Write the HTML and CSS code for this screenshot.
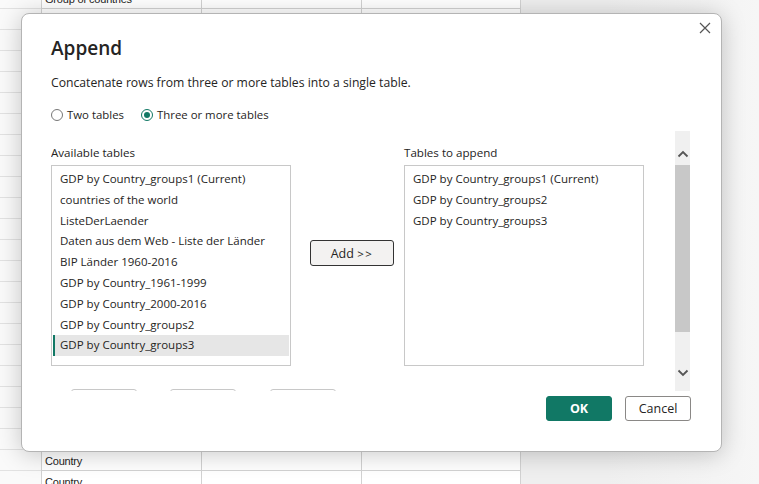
FILE: index.html
```html
<!DOCTYPE html>
<html>
<head>
<meta charset="utf-8">
<link rel="stylesheet" href="styles.css">
</head>
<body>
<div class="app">
  <div class="sheet">
    <div class="row"><div class="hdr"></div><div class="cell">Group of countries</div><div class="cell"></div><div class="cell"></div></div>
    <div class="row"><div class="hdr"></div><div class="cell"></div><div class="cell"></div><div class="cell"></div></div>
    <div class="row"><div class="hdr"></div><div class="cell"></div><div class="cell"></div><div class="cell"></div></div>
    <div class="row"><div class="hdr"></div><div class="cell"></div><div class="cell"></div><div class="cell"></div></div>
    <div class="row"><div class="hdr"></div><div class="cell"></div><div class="cell"></div><div class="cell"></div></div>
    <div class="row"><div class="hdr"></div><div class="cell"></div><div class="cell"></div><div class="cell"></div></div>
    <div class="row"><div class="hdr"></div><div class="cell"></div><div class="cell"></div><div class="cell"></div></div>
    <div class="row"><div class="hdr"></div><div class="cell"></div><div class="cell"></div><div class="cell"></div></div>
    <div class="row"><div class="hdr"></div><div class="cell"></div><div class="cell"></div><div class="cell"></div></div>
    <div class="row"><div class="hdr"></div><div class="cell"></div><div class="cell"></div><div class="cell"></div></div>
    <div class="row"><div class="hdr"></div><div class="cell"></div><div class="cell"></div><div class="cell"></div></div>
    <div class="row"><div class="hdr"></div><div class="cell"></div><div class="cell"></div><div class="cell"></div></div>
    <div class="row"><div class="hdr"></div><div class="cell"></div><div class="cell"></div><div class="cell"></div></div>
    <div class="row"><div class="hdr"></div><div class="cell"></div><div class="cell"></div><div class="cell"></div></div>
    <div class="row"><div class="hdr"></div><div class="cell"></div><div class="cell"></div><div class="cell"></div></div>
    <div class="row"><div class="hdr"></div><div class="cell"></div><div class="cell"></div><div class="cell"></div></div>
    <div class="row"><div class="hdr"></div><div class="cell"></div><div class="cell"></div><div class="cell"></div></div>
    <div class="row"><div class="hdr"></div><div class="cell"></div><div class="cell"></div><div class="cell"></div></div>
    <div class="row"><div class="hdr"></div><div class="cell"></div><div class="cell"></div><div class="cell"></div></div>
    <div class="row"><div class="hdr"></div><div class="cell"></div><div class="cell"></div><div class="cell"></div></div>
    <div class="row"><div class="hdr"></div><div class="cell"></div><div class="cell"></div><div class="cell"></div></div>
    <div class="row"><div class="hdr"></div><div class="cell"></div><div class="cell"></div><div class="cell"></div></div>
    <div class="row"><div class="hdr"></div><div class="cell">Country</div><div class="cell"></div><div class="cell"></div></div>
    <div class="row"><div class="hdr"></div><div class="cell">Country</div><div class="cell"></div><div class="cell"></div></div>
  </div>

  <div class="dialog">
    <button class="close" aria-label="Close">
      <svg width="12" height="12" viewBox="0 0 12 12"><path d="M1 1L11 11M11 1L1 11" stroke="#555" stroke-width="1.2" fill="none"/></svg>
    </button>
    <h1 class="title">Append</h1>
    <p class="desc">Concatenate rows from three or more tables into a single table.</p>
    <div class="radios">
      <label class="radio"><span class="dot"></span>Two tables</label>
      <label class="radio"><span class="dot on"></span>Three or more tables</label>
    </div>
    <div class="body">
      <div class="scroll">
        <div class="cols">
          <div class="col">
            <div class="lbl">Available tables</div>
            <ul class="list">
              <li>GDP by Country_groups1 (Current)</li>
              <li>countries of the world</li>
              <li>ListeDerLaender</li>
              <li>Daten aus dem Web - Liste der Länder</li>
              <li>BIP Länder 1960-2016</li>
              <li>GDP by Country_1961-1999</li>
              <li>GDP by Country_2000-2016</li>
              <li>GDP by Country_groups2</li>
              <li class="sel">GDP by Country_groups3</li>
            </ul>
          </div>
          <div class="mid">
            <button class="add">Add <span class="gt">&gt;&gt;</span></button>
          </div>
          <div class="col">
            <div class="lbl">Tables to append</div>
            <ul class="list">
              <li>GDP by Country_groups1 (Current)</li>
              <li>GDP by Country_groups2</li>
              <li>GDP by Country_groups3</li>
            </ul>
          </div>
        </div>
        <div class="subbtns">
          <span class="sb"></span><span class="sb"></span><span class="sb"></span>
        </div>
      </div>
      <div class="vbar">
        <svg class="arr up" width="12" height="8" viewBox="0 0 12 8"><path d="M1.5 6.5L6 2L10.5 6.5" stroke="#555" stroke-width="1.8" fill="none"/></svg>
        <div class="thumb"></div>
        <div class="track"></div>
        <svg class="arr down" width="12" height="8" viewBox="0 0 12 8"><path d="M1.5 1.5L6 6L10.5 1.5" stroke="#555" stroke-width="1.8" fill="none"/></svg>
      </div>
    </div>
    <div class="footer">
      <button class="btn ok">OK</button>
      <button class="btn cancel">Cancel</button>
    </div>
  </div>
</div>
</body>
</html>
```

FILE: styles.css
```css
* { box-sizing: border-box; }
html, body { margin: 0; padding: 0; }
body {
  width: 759px;
  height: 484px;
  overflow: hidden;
  background: linear-gradient(90deg, #efefef 0%, #efefef 80%, #f6f6f6 100%);
  font-family: "Open Sans", "Noto Sans", sans-serif;
  color: #252423;
}
.app { position: relative; width: 759px; height: 484px; overflow: hidden; }
.sheet {
  margin-top: -12px;
  display: flex;
  flex-direction: column;
  width: 522px;
}
.row {
  display: grid;
  grid-template-columns: 41px 160px 160px 160px;
  height: 21px;
}
.hdr { border-bottom: 1px solid #e2e2e2; background: #fafafa; }
.cell {
  background: #fff;
  border-left: 1px solid #d2d2d2;
  border-bottom: 1px solid #d2d2d2;
  font-family: "Liberation Sans", sans-serif;
  font-size: 11px;
  padding: 5px 0 0 3px;
  color: #252423;
  letter-spacing: -0.2px;
}
.cell:last-child { border-right: 1px solid #d2d2d2; }

.dialog {
  position: absolute;
  left: 21px;
  top: 13px;
  width: 701px;
  height: 439px;
  background: #fff;
  border: 1px solid #b4b4b4;
  border-radius: 8px;
  box-shadow: 0 2px 24px rgba(0,0,0,0.22);
  padding: 0 30px 0 29px;
  display: flex;
  flex-direction: column;
}
.close {
  position: absolute;
  right: 6px;
  top: 4px;
  width: 20px;
  height: 20px;
  padding: 0;
  border: 0;
  background: transparent;
  display: flex;
  align-items: center;
  justify-content: center;
}
.title {
  margin: 21px 0 0 0;
  font-size: 19px;
  font-weight: 600;
  line-height: 26px;
  color: #252423;
}
.desc {
  margin: 13px 0 0 0;
  font-size: 12.2px;
  line-height: 17px;
}
.radios {
  display: flex;
  gap: 17px;
  margin-top: 16px;
  font-size: 11.4px;
  line-height: 16px;
}
.radio { display: flex; align-items: center; gap: 4px; }
.dot {
  width: 12px; height: 12px;
  border: 1px solid #777;
  border-radius: 50%;
  background: #fff;
  position: relative;
}
.dot.on { border-color: #117865; }
.dot.on::after {
  content: "";
  position: absolute;
  left: 2px; top: 2px;
  width: 6px; height: 6px;
  border-radius: 50%;
  background: #117865;
}
.body {
  display: flex;
  margin-top: 8px;
  height: 260px;
}
.scroll {
  width: 624px;
  height: 260px;
  overflow: hidden;
}
.cols {
  display: flex;
  padding-top: 14px;
}
.col { width: 240px; display: flex; flex-direction: column; }
.lbl { font-size: 11.6px; line-height: 16px; height: 20px; }
.list {
  list-style: none;
  margin: 0;
  padding: 3px 1px;
  width: 240px;
  height: 201px;
  border: 1px solid #c8c8c8;
  font-size: 11.5px;
}
.list li {
  height: 20.8px;
  line-height: 20.8px;
  padding-left: 7px;
  white-space: nowrap;
}
.list li.sel {
  background: #e6e6e6;
  border-left: 2px solid #117865;
  padding-left: 5px;
}
.mid {
  width: 113px;
  display: flex;
  justify-content: flex-start;
  padding-top: 95px;
  padding-left: 19px;
}
.add {
  width: 84px;
  height: 26px;
  background: #f3f2f1;
  border: 1px solid #333;
  border-radius: 3px;
  font-family: inherit;
  font-size: 12.5px;
  color: #252423;
  padding: 0;
}
.add .gt { letter-spacing: 1.5px; font-size: 11.5px; }
.subbtns {
  display: flex;
  gap: 33px;
  padding-left: 20px;
  margin-top: 23px;
}
.subbtns .sb {
  width: 66px;
  height: 20px;
  border: 1px solid #c8c8c8;
  border-radius: 3px;
}
.subbtns .sb:nth-child(3) { margin-left: 1px; }
.vbar {
  width: 15px;
  height: 260px;
  background: #f0f0f0;
  display: flex;
  flex-direction: column;
  align-items: center;
}
.vbar .arr { flex: none; }
.vbar .arr.up { margin: 19px 0 7px 0; }
.vbar .arr.down { margin: 0 0 14px 0; }
.thumb { width: 15px; height: 167px; background: #c8c8c8; flex: none; }
.track { flex: 1; }
.footer {
  display: flex;
  justify-content: flex-end;
  gap: 13px;
  margin-top: 5px;
}
.btn {
  width: 66px;
  height: 25px;
  border-radius: 3px;
  font-family: inherit;
  font-size: 12.5px;
  padding: 0;
}
.ok { background: #117865; color: #fff; border: 1px solid #117865; font-weight: 700; }
.cancel { background: #fff; color: #252423; border: 1px solid #8a8886; }
```
